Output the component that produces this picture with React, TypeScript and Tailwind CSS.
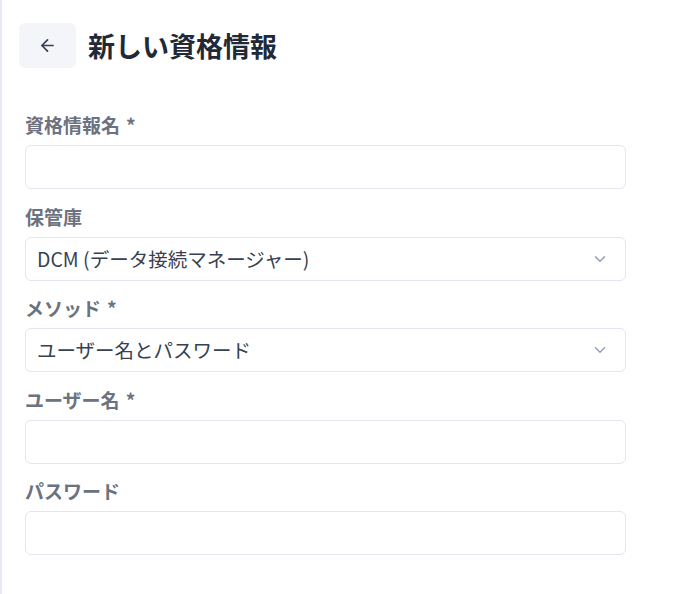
import { ArrowLeft, ChevronDown } from "lucide-react";

const font = { fontFamily: '"Noto Sans CJK JP", "Noto Sans", sans-serif' };

function Field({ label, required, children }: { label: string; required?: boolean; children: React.ReactNode }) {
  return (
    <div className="flex flex-col">
      <label className="text-[19px] leading-6 font-bold text-[#6b7280] mb-2">
        {label}
        {required && <span className="ml-1.5 font-semibold">*</span>}
      </label>
      {children}
    </div>
  );
}

function TextInput() {
  return (
    <input
      type="text"
      className="h-[44px] w-full rounded-md border border-[#e2e6f2] bg-white pl-[11px] text-[19.5px] text-[#374151] outline-none"
    />
  );
}

function SelectBox({ value }: { value: string }) {
  return (
    <div className="h-[44px] w-full rounded-md border border-[#e2e6f2] bg-white pl-[11px] pr-[16px] flex items-center justify-between">
      <span className="text-[19.5px] text-[#374151]">{value}</span>
      <ChevronDown size={18} strokeWidth={2} className="text-[#94a0b8]" />
    </div>
  );
}

export default function App() {
  return (
    <div className="h-[594px] w-full bg-white border-l-2 border-[#e6e8f5]" style={font}>
      <div className="flex items-center pl-[17px] pt-[23px]">
        <button className="h-[45px] w-[57px] rounded-md bg-[#f4f5f9] flex items-center justify-center text-[#374151]">
          <ArrowLeft size={19} strokeWidth={2.2} />
        </button>
        <h1 className="ml-3 text-[27px] leading-9 font-bold text-[#1f2937]">新しい資格情報</h1>
      </div>

      <div className="mt-[45px] pl-[23px] w-[624px] flex flex-col gap-[15.5px]">
        <Field label="資格情報名" required>
          <TextInput />
        </Field>
        <Field label="保管庫">
          <SelectBox value="DCM (データ接続マネージャー)" />
        </Field>
        <Field label="メソッド" required>
          <SelectBox value="ユーザー名とパスワード" />
        </Field>
        <Field label="ユーザー名" required>
          <TextInput />
        </Field>
        <Field label="パスワード">
          <TextInput />
        </Field>
      </div>
    </div>
  );
}
